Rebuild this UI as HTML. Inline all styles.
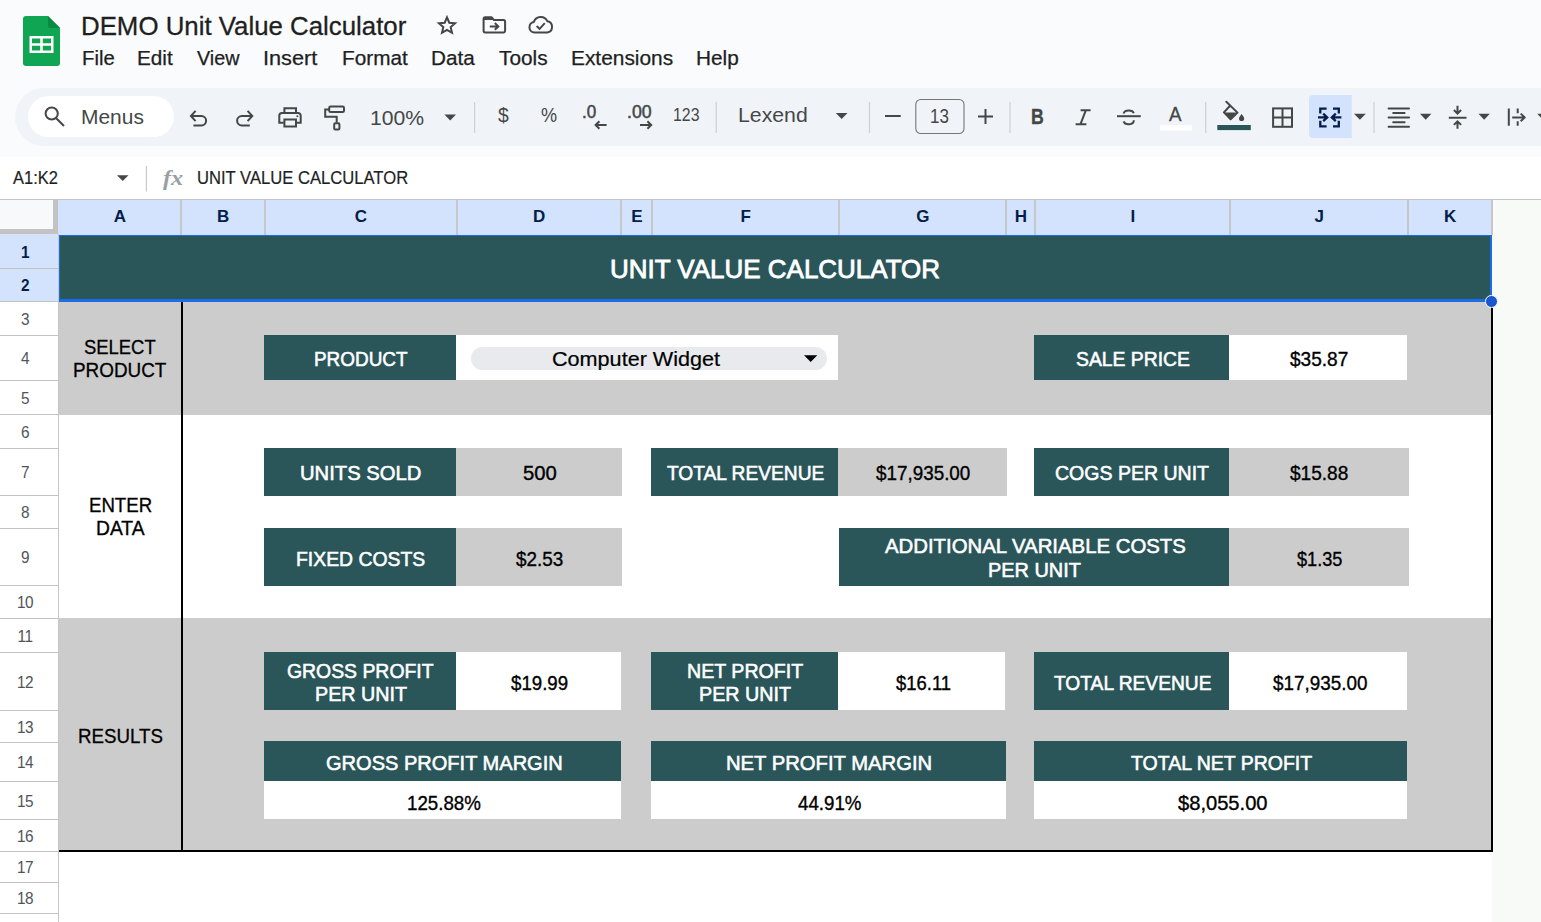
<!DOCTYPE html>
<html><head><meta charset="utf-8"><title>DEMO Unit Value Calculator</title>
<style>
html,body{margin:0;padding:0;}
body{width:1541px;height:922px;overflow:hidden;position:relative;background:#f9fbfd;font-family:"Liberation Sans",sans-serif;}
.r{position:absolute;box-sizing:content-box;}
.t{position:absolute;white-space:nowrap;line-height:1;transform-origin:0 0;display:block;}
.ch{position:absolute;top:206.6px;width:40px;text-align:center;font-size:17px;font-weight:700;color:#041e49;line-height:20px;}
.rn{position:absolute;left:4.5px;width:40px;text-align:center;font-size:16.5px;color:#50545a;line-height:20px;letter-spacing:-0.6px;transform:scaleX(0.93);}
.rn.sel{font-weight:700;color:#041e49;}
#tb{position:absolute;left:14.5px;top:88px;width:1600px;height:58px;border-radius:29px;background:#f0f4f9;}
#sb{position:absolute;left:28.3px;top:96px;width:145.7px;height:41.3px;border-radius:21px;background:#fff;}
#fb{position:absolute;left:0;top:157px;width:1541px;height:42px;background:#fff;}
svg.ov{position:absolute;left:0;top:0;}
</style></head><body>
<div id="tb"></div><div id="sb"></div><div id="fb"></div>
<div class="r" style="left:0px;top:199px;width:1492px;height:723px;background:#fff;"></div>
<div class="r" style="left:1492px;top:200px;width:49px;height:722px;background:#f8faf7;"></div>
<div class="r" style="left:0px;top:199px;width:1541px;height:1px;background:#c6c6c6;"></div>
<div class="r" style="left:58px;top:200px;width:1434px;height:35px;background:#d3e3fd;"></div>
<div class="r" style="left:180.3px;top:200px;width:1.799999999999983px;height:35px;background:#c5c7ca;"></div>
<div class="r" style="left:263.8px;top:200px;width:1.8000000000000114px;height:35px;background:#c5c7ca;"></div>
<div class="r" style="left:455.8px;top:200px;width:1.8000000000000114px;height:35px;background:#c5c7ca;"></div>
<div class="r" style="left:620.3px;top:200px;width:1.8000000000000682px;height:35px;background:#c5c7ca;"></div>
<div class="r" style="left:650.8px;top:200px;width:1.8000000000000682px;height:35px;background:#c5c7ca;"></div>
<div class="r" style="left:838.3px;top:200px;width:1.8000000000000682px;height:35px;background:#c5c7ca;"></div>
<div class="r" style="left:1004.8px;top:200px;width:1.8000000000000682px;height:35px;background:#c5c7ca;"></div>
<div class="r" style="left:1034.3px;top:200px;width:1.7999999999999545px;height:35px;background:#c5c7ca;"></div>
<div class="r" style="left:1228.8px;top:200px;width:1.7999999999999545px;height:35px;background:#c5c7ca;"></div>
<div class="r" style="left:1407.3px;top:200px;width:1.7999999999999545px;height:35px;background:#c5c7ca;"></div>
<div class="r" style="left:1490.8px;top:200px;width:1.7999999999999545px;height:35px;background:#c5c7ca;"></div>
<div class="r" style="left:0px;top:200px;width:58.4px;height:34.30000000000001px;background:#c3c3c3;"></div>
<div class="r" style="left:0px;top:200px;width:53px;height:29px;background:#f8f9fa;"></div>
<div class="r" style="left:0px;top:235px;width:58px;height:687px;background:#fff;"></div>
<div class="r" style="left:0px;top:234px;width:58px;height:67px;background:#d3e3fd;"></div>
<div class="r" style="left:0px;top:267.8px;width:58px;height:1.3000000000000114px;background:#c2c2c2;"></div>
<div class="r" style="left:0px;top:300.8px;width:58px;height:1.3000000000000114px;background:#c2c2c2;"></div>
<div class="r" style="left:0px;top:334.8px;width:58px;height:1.3000000000000114px;background:#c2c2c2;"></div>
<div class="r" style="left:0px;top:379.8px;width:58px;height:1.3000000000000114px;background:#c2c2c2;"></div>
<div class="r" style="left:0px;top:413.8px;width:58px;height:1.3000000000000114px;background:#c2c2c2;"></div>
<div class="r" style="left:0px;top:447.8px;width:58px;height:1.3000000000000114px;background:#c2c2c2;"></div>
<div class="r" style="left:0px;top:494.8px;width:58px;height:1.3000000000000114px;background:#c2c2c2;"></div>
<div class="r" style="left:0px;top:527.8px;width:58px;height:1.3000000000000682px;background:#c2c2c2;"></div>
<div class="r" style="left:0px;top:584.8px;width:58px;height:1.3000000000000682px;background:#c2c2c2;"></div>
<div class="r" style="left:0px;top:617.8px;width:58px;height:1.3000000000000682px;background:#c2c2c2;"></div>
<div class="r" style="left:0px;top:651.8px;width:58px;height:1.3000000000000682px;background:#c2c2c2;"></div>
<div class="r" style="left:0px;top:709.8px;width:58px;height:1.3000000000000682px;background:#c2c2c2;"></div>
<div class="r" style="left:0px;top:741.8px;width:58px;height:1.3000000000000682px;background:#c2c2c2;"></div>
<div class="r" style="left:0px;top:780.8px;width:58px;height:1.3000000000000682px;background:#c2c2c2;"></div>
<div class="r" style="left:0px;top:818.8px;width:58px;height:1.3000000000000682px;background:#c2c2c2;"></div>
<div class="r" style="left:0px;top:850.8px;width:58px;height:1.3000000000000682px;background:#c2c2c2;"></div>
<div class="r" style="left:0px;top:881.8px;width:58px;height:1.3000000000000682px;background:#c2c2c2;"></div>
<div class="r" style="left:0px;top:912.8px;width:58px;height:1.3000000000000682px;background:#c2c2c2;"></div>
<div class="r" style="left:0px;top:943.8px;width:58px;height:1.3000000000000682px;background:#c2c2c2;"></div>
<div class="r" style="left:57.5px;top:234px;width:1.5px;height:688px;background:#c6c6c6;"></div>
<span class="ch" style="left:100.0px;">A</span>
<span class="ch" style="left:203.2px;">B</span>
<span class="ch" style="left:341.0px;">C</span>
<span class="ch" style="left:519.2px;">D</span>
<span class="ch" style="left:616.8px;">E</span>
<span class="ch" style="left:725.8px;">F</span>
<span class="ch" style="left:902.8px;">G</span>
<span class="ch" style="left:1000.8px;">H</span>
<span class="ch" style="left:1112.8px;">I</span>
<span class="ch" style="left:1299.2px;">J</span>
<span class="ch" style="left:1430.2px;">K</span>
<span class="rn sel" style="top:242.0px;">1</span>
<span class="rn sel" style="top:275.0px;">2</span>
<span class="rn" style="top:308.5px;">3</span>
<span class="rn" style="top:348.0px;">4</span>
<span class="rn" style="top:387.5px;">5</span>
<span class="rn" style="top:421.5px;">6</span>
<span class="rn" style="top:462.0px;">7</span>
<span class="rn" style="top:502.0px;">8</span>
<span class="rn" style="top:547.0px;">9</span>
<span class="rn" style="top:592.0px;">10</span>
<span class="rn" style="top:625.5px;">11</span>
<span class="rn" style="top:671.5px;">12</span>
<span class="rn" style="top:716.5px;">13</span>
<span class="rn" style="top:752.0px;">14</span>
<span class="rn" style="top:790.5px;">15</span>
<span class="rn" style="top:825.5px;">16</span>
<span class="rn" style="top:857.0px;">17</span>
<span class="rn" style="top:888.0px;">18</span>
<div class="r" style="left:59px;top:235px;width:1433px;height:66px;background:#2a565a;"></div>
<div class="r" style="left:59px;top:301px;width:1433px;height:113.60000000000002px;background:#cccccc;"></div>
<div class="r" style="left:59px;top:618.1px;width:1433px;height:232.89999999999998px;background:#cccccc;"></div>
<div class="r" style="left:264px;top:334.8px;width:192px;height:44.89999999999998px;background:#2a565a;"></div>
<div class="r" style="left:456px;top:334.8px;width:382.29999999999995px;height:44.89999999999998px;background:#fff;"></div>
<div class="r" style="left:1034.3px;top:334.8px;width:194.70000000000005px;height:44.89999999999998px;background:#2a565a;"></div>
<div class="r" style="left:1229px;top:334.8px;width:178.4000000000001px;height:44.89999999999998px;background:#fff;"></div>
<div class="r" style="left:264px;top:447.5px;width:192px;height:48.30000000000001px;background:#2a565a;"></div>
<div class="r" style="left:456px;top:447.5px;width:165.79999999999995px;height:48.30000000000001px;background:#cccccc;"></div>
<div class="r" style="left:651px;top:447.5px;width:187.39999999999998px;height:48.30000000000001px;background:#2a565a;"></div>
<div class="r" style="left:838.4px;top:447.5px;width:168.60000000000002px;height:48.30000000000001px;background:#cccccc;"></div>
<div class="r" style="left:1034.3px;top:447.5px;width:194.70000000000005px;height:48.30000000000001px;background:#2a565a;"></div>
<div class="r" style="left:1229px;top:447.5px;width:180px;height:48.30000000000001px;background:#cccccc;"></div>
<div class="r" style="left:264px;top:528.0px;width:192px;height:57.799999999999955px;background:#2a565a;"></div>
<div class="r" style="left:456px;top:528.0px;width:165.79999999999995px;height:57.799999999999955px;background:#cccccc;"></div>
<div class="r" style="left:838.5px;top:528.0px;width:390.5px;height:57.799999999999955px;background:#2a565a;"></div>
<div class="r" style="left:1229px;top:528.0px;width:180px;height:57.799999999999955px;background:#cccccc;"></div>
<div class="r" style="left:264px;top:651.5px;width:192px;height:58.5px;background:#2a565a;"></div>
<div class="r" style="left:456px;top:651.5px;width:164.5px;height:58.5px;background:#fff;"></div>
<div class="r" style="left:651px;top:651.5px;width:187.20000000000005px;height:58.5px;background:#2a565a;"></div>
<div class="r" style="left:838.2px;top:651.5px;width:167.29999999999995px;height:58.5px;background:#fff;"></div>
<div class="r" style="left:1034.3px;top:651.5px;width:194.70000000000005px;height:58.5px;background:#2a565a;"></div>
<div class="r" style="left:1229px;top:651.5px;width:178.4000000000001px;height:58.5px;background:#fff;"></div>
<div class="r" style="left:264px;top:740.8px;width:356.5px;height:40.200000000000045px;background:#2a565a;"></div>
<div class="r" style="left:264px;top:781.0px;width:356.5px;height:37.700000000000045px;background:#fff;"></div>
<div class="r" style="left:651px;top:740.8px;width:354.5px;height:40.200000000000045px;background:#2a565a;"></div>
<div class="r" style="left:651px;top:781.0px;width:354.5px;height:37.700000000000045px;background:#fff;"></div>
<div class="r" style="left:1034.3px;top:740.8px;width:373.10000000000014px;height:40.200000000000045px;background:#2a565a;"></div>
<div class="r" style="left:1034.3px;top:781.0px;width:373.10000000000014px;height:37.700000000000045px;background:#fff;"></div>
<div class="r" style="left:470.5px;top:346.5px;width:356.0px;height:23.5px;background:#e8eaed;border-radius:12px;"></div>
<div class="r" style="left:180.9px;top:302px;width:1.799999999999983px;height:549.5px;background:#000;"></div>
<div class="r" style="left:1490.9px;top:302px;width:1.699999999999818px;height:549.5px;background:#000;"></div>
<div class="r" style="left:59px;top:850.2px;width:1433.6px;height:1.6999999999999318px;background:#000;"></div>
<div class="r" style="left:59.3px;top:234.7px;width:1433.1000000000001px;height:1.8000000000000114px;background:#1a6ce8;"></div>
<div class="r" style="left:59.3px;top:234.7px;width:1.0px;height:67.10000000000002px;background:#1a6ce8;"></div>
<div class="r" style="left:59.3px;top:298.8px;width:1433.1000000000001px;height:3.0px;background:#1a6ce8;"></div>
<div class="r" style="left:1489.9px;top:234.7px;width:2.5px;height:67.10000000000002px;background:#1a6ce8;"></div>
<div class="r" style="left:1485.4px;top:295.1px;width:10.6px;height:10.6px;border-radius:50%;background:#1857cf;border:1px solid #fff;"></div>
<svg class="ov" width="1541" height="922" viewBox="0 0 1541 922">
<path d="M26 16 H48 L60 28 V63 a3 3 0 0 1 -3 3 H26 a3 3 0 0 1 -3 -3 V19 a3 3 0 0 1 3 -3 Z" fill="#10a553"/>
<path d="M48 16 L60 28 H50.5 a2.5 2.5 0 0 1 -2.5 -2.5 Z" fill="#0b8a42"/>
<path d="M29.5 36 H53.5 V53 H29.5 Z M32 38.5 V43.2 H40.2 V38.5 Z M42.8 38.5 V43.2 H51 V38.5 Z M32 45.8 V50.5 H40.2 V45.8 Z M42.8 45.8 V50.5 H51 V45.8 Z" fill="#fff" fill-rule="evenodd"/>
<polygon points="447.00,17.40 449.29,22.74 455.08,23.27 450.71,27.11 452.00,32.78 447.00,29.80 442.00,32.78 443.29,27.11 438.92,23.27 444.71,22.74" stroke="#444746" fill="none" stroke-width="2" stroke-linejoin="miter"/>
<path d="M485.2 17.3 h6.3 l2.4 2.6 h9.6 a1.6 1.6 0 0 1 1.6 1.6 v9.3 a1.6 1.6 0 0 1 -1.6 1.6 h-18.3 a1.6 1.6 0 0 1 -1.6 -1.6 v-11.9 a1.6 1.6 0 0 1 1.6 -1.6 z" stroke="#444746" fill="none" stroke-width="2"/>
<path d="M484 17.3 h7.5 l2.4 2.6 h-9.9 z" fill="#444746"/>
<path d="M489.8 26.4 H498 M494.8 23 L498.3 26.4 L494.8 29.8" stroke="#444746" fill="none" stroke-width="2" stroke-width="2.1"/>
<path d="M534.6 32.6 a5.4 5.4 0 0 1 -0.8 -10.7 a7.4 7.4 0 0 1 13.6 -0.7 a5.8 5.8 0 0 1 -0.2 11.4 z" stroke="#444746" fill="none" stroke-width="2"/>
<path d="M536.7 26 L539.6 28.9 L544.8 23.2" stroke="#444746" fill="none" stroke-width="2" stroke-width="2.1"/>
<circle cx="51.7" cy="113.5" r="6.1" stroke="#444746" fill="none" stroke-width="2" stroke-width="2.2"/><path d="M56.2 118.2 L64 126" stroke="#444746" fill="none" stroke-width="2" stroke-width="2.4"/>
<path d="M195.6 110.9 L190.9 116 L195.6 121.1 M191.6 116 H201.4 A4.7 4.7 0 0 1 201.4 125.4 H193.4" stroke="#444746" fill="none" stroke-width="2" stroke-width="2.2"/>
<path d="M247.6 110.9 L252.3 116 L247.6 121.1 M251.6 116 H241.8 A4.7 4.7 0 0 0 241.8 125.4 H249.8" stroke="#444746" fill="none" stroke-width="2" stroke-width="2.2"/>
<path d="M284.4 112.4 V108.2 H296 V112.4 M283.8 122.7 H279.3 V115.6 a2.6 2.6 0 0 1 2.6 -2.6 H298.1 a2.6 2.6 0 0 1 2.6 2.6 V122.7 H296.6" stroke="#444746" fill="none" stroke-width="2"/>
<rect x="284.4" y="119.5" width="11.6" height="7" stroke="#444746" fill="none" stroke-width="2"/>
<circle cx="297.4" cy="116.2" r="1" fill="#444746"/>
<rect x="329.2" y="106.5" width="14.8" height="5.6" rx="1.4" stroke="#444746" fill="none" stroke-width="2"/>
<path d="M329.2 109.6 H325.2 V116.8 H336.7 V122.6" stroke="#444746" fill="none" stroke-width="2"/>
<rect x="334.2" y="123.2" width="5.2" height="6.4" rx="1" stroke="#444746" fill="none" stroke-width="2"/>
<polygon points="444.4,114.6 456,114.6 450.2,120.6" fill="#444746"/>
<polygon points="835.8,113 847.5,113 841.65,119" fill="#444746"/>
<polygon points="1354,113.8 1365.8,113.8 1359.9,119.7" fill="#444746"/>
<polygon points="1420,113.8 1431.4,113.8 1425.7,119.7" fill="#444746"/>
<polygon points="1478.5,113.8 1489.8,113.8 1484.15,119.7" fill="#444746"/>
<polygon points="1537.2,113.8 1548.6,113.8 1542.9,119.7" fill="#444746"/>
<polygon points="117,175.2 128.5,175.2 122.75,181" fill="#444746"/>
<polygon points="804,355.3 817.3,355.3 810.65,362" fill="#000"/>
<rect x="474.0" y="102" width="1.2" height="31" fill="#cdd0d5"/>
<rect x="715.6" y="102" width="1.2" height="31" fill="#cdd0d5"/>
<rect x="868.9" y="102" width="1.2" height="31" fill="#cdd0d5"/>
<rect x="1009.4" y="102" width="1.2" height="31" fill="#cdd0d5"/>
<rect x="1205.1000000000001" y="102" width="1.2" height="31" fill="#cdd0d5"/>
<rect x="1373.4" y="102" width="1.2" height="31" fill="#cdd0d5"/>
<rect x="145.8" y="166" width="1.2" height="25.5" fill="#c7c9cc"/>
<path d="M595.6 125 H606.6 M599.4 121.3 L595.6 125 L599.4 128.7" stroke="#444746" fill="none" stroke-width="2" stroke-width="1.8"/>
<path d="M640 125 H651.2 M647.4 121.3 L651.2 125 L647.4 128.7" stroke="#444746" fill="none" stroke-width="2" stroke-width="1.8"/>
<path d="M885 116 H900.7 M978 116.5 H993 M985.5 109 V124" stroke="#444746" fill="none" stroke-width="2"/>
<rect x="915.8" y="99.5" width="48.2" height="34" rx="5" fill="none" stroke="#747775" stroke-width="1.1"/>
<path d="M1080.6 110.2 H1090.6 M1075.6 124.3 H1086.4 M1085.9 110.2 L1080.4 124.3" stroke="#444746" fill="none" stroke-width="2" stroke-width="3.1"/>
<path d="M1117 116.2 H1140.8" stroke="#444746" fill="none" stroke-width="2" stroke-width="2.1"/>
<path d="M1133.8 113.2 A5.2 3.6 0 0 0 1123.6 113.4 M1123.6 121.4 A5.2 4.0 0 0 0 1133.8 120.2" stroke="#444746" fill="none" stroke-width="2" stroke-width="2.8"/>
<rect x="1160" y="125" width="32" height="5.5" fill="#fff"/>
<path d="M1226.3 101.7 L1237.5 112.6 L1230.6 119.3 L1223.9 112.4 L1229.6 106.2" stroke="#444746" fill="none" stroke-width="2" stroke-width="2.3" stroke-linejoin="round" stroke-linecap="round"/>
<path d="M1224.4 112.4 H1237 L1230.6 118.8 Z" fill="#444746"/>
<path d="M1241.6 114 C1242.9 115.8 1244.2 117.3 1244.2 118.4 a2.6 2.6 0 0 1 -5.2 0 C1239 117.3 1240.3 115.8 1241.6 114 Z" fill="#444746"/>
<rect x="1217.3" y="125" width="33.5" height="5.1" fill="#2a565a"/>
<rect x="1273.1" y="108.4" width="18.9" height="18.4" stroke="#444746" fill="none" stroke-width="2" stroke-width="2.4"/><path d="M1282.5 108.4 V126.8 M1273.1 117.6 H1292" stroke="#444746" fill="none" stroke-width="2" stroke-width="2.2"/>
<path d="M1313 95 H1351.8 V138 H1313 a4 4 0 0 1 -4 -4 V99 a4 4 0 0 1 4 -4 Z" fill="#d3e3fd"/>
<path d="M1326.6 108.6 H1320.3 V113.4 M1320.3 120.8 V126.4 H1326.6 M1333 108.6 H1338.8 V113.4 M1338.8 120.8 V126.4 H1333" stroke="#041e49" fill="none" stroke-width="2.3"/>
<path d="M1318 117.4 H1326.6 M1323.2 113.6 L1327.2 117.4 L1323.2 121.2 M1341.4 117.4 H1332.4 M1335.8 113.6 L1331.8 117.4 L1335.8 121.2" stroke="#041e49" fill="none" stroke-width="2.3" stroke-width="2.4"/>
<path d="M1388.6 108.4 H1409 M1393.2 113 H1404.6 M1388.6 117.6 H1409 M1393.2 122.2 H1404.6 M1388.6 126.7 H1409" stroke="#444746" fill="none" stroke-width="2" stroke-width="2" stroke-linecap="round"/>
<path d="M1448.8 117.7 H1466.5 M1457.5 105.8 V113 M1453.9 110 L1457.5 113.6 L1461.1 110 M1457.5 128.8 V121.8 M1453.9 124.9 L1457.5 121.3 L1461.1 124.9" stroke="#444746" fill="none" stroke-width="2" stroke-width="2.2"/>
<path d="M1508.8 108.4 V125.8 M1517.7 108.4 V113.2 M1517.7 121.3 V125.8 M1512.2 117.4 H1524.2 M1520.7 113.6 L1524.6 117.4 L1520.7 121.2" stroke="#444746" fill="none" stroke-width="2" stroke-width="2.2"/>
</svg>
<span class="t" style="left:163.2px;top:167.2px;font-size:22px;font-family:'Liberation Serif',serif;font-style:italic;font-weight:700;color:#9b9fa4;transform:scaleX(1.1);">fx</span>
<span class="t" style="left:81.14px;top:14.00px;font-size:25.73px;color:#1f1f1f;transform:scaleX(1.0040);-webkit-text-stroke:0.3px #1f1f1f;">DEMO Unit Value Calculator</span>
<span class="t" style="left:81.59px;top:49.00px;font-size:19.69px;color:#1f1f1f;transform:scaleX(1.0317);-webkit-text-stroke:0.25px #1f1f1f;">File</span>
<span class="t" style="left:137.07px;top:49.00px;font-size:19.69px;color:#1f1f1f;transform:scaleX(1.0537);-webkit-text-stroke:0.25px #1f1f1f;">Edit</span>
<span class="t" style="left:197.12px;top:49.00px;font-size:19.69px;color:#1f1f1f;transform:scaleX(1.0035);-webkit-text-stroke:0.25px #1f1f1f;">View</span>
<span class="t" style="left:263.02px;top:49.00px;font-size:19.69px;color:#1f1f1f;transform:scaleX(1.1022);-webkit-text-stroke:0.25px #1f1f1f;">Insert</span>
<span class="t" style="left:341.57px;top:49.00px;font-size:19.69px;color:#1f1f1f;transform:scaleX(1.0545);-webkit-text-stroke:0.25px #1f1f1f;">Format</span>
<span class="t" style="left:431.07px;top:49.00px;font-size:19.69px;color:#1f1f1f;transform:scaleX(1.0520);-webkit-text-stroke:0.25px #1f1f1f;">Data</span>
<span class="t" style="left:499.12px;top:49.00px;font-size:19.69px;color:#1f1f1f;transform:scaleX(1.0571);-webkit-text-stroke:0.25px #1f1f1f;">Tools</span>
<span class="t" style="left:570.56px;top:49.00px;font-size:19.69px;color:#1f1f1f;transform:scaleX(1.0607);-webkit-text-stroke:0.25px #1f1f1f;">Extensions</span>
<span class="t" style="left:696.07px;top:49.00px;font-size:19.69px;color:#1f1f1f;transform:scaleX(1.0559);-webkit-text-stroke:0.25px #1f1f1f;">Help</span>
<span class="t" style="left:80.68px;top:107.00px;font-size:20.49px;color:#444746;transform:scaleX(1.0226);">Menus</span>
<span class="t" style="left:370.38px;top:108.00px;font-size:20.78px;color:#444746;transform:scaleX(1.0185);">100%</span>
<span class="t" style="left:497.70px;top:105.00px;font-size:20.06px;color:#444746;transform:scaleX(0.9636);">$</span>
<span class="t" style="left:540.70px;top:105.00px;font-size:20.2px;color:#444746;transform:scaleX(0.8944);">%</span>
<span class="t" style="left:581.67px;top:104.00px;font-size:17.44px;color:#444746;transform:scaleX(0.9751);-webkit-text-stroke:0.5px #444746;">.0</span>
<span class="t" style="left:626.83px;top:104.00px;font-size:17.44px;color:#444746;transform:scaleX(1.0152);-webkit-text-stroke:0.5px #444746;">.00</span>
<span class="t" style="left:673.10px;top:107.00px;font-size:17.73px;color:#444746;transform:scaleX(0.8952);">123</span>
<span class="t" style="left:737.88px;top:105.00px;font-size:20.93px;color:#444746;transform:scaleX(1.0164);">Lexend</span>
<span class="t" style="left:929.73px;top:107.00px;font-size:19.62px;color:#444746;transform:scaleX(0.8658);">13</span>
<span class="t" style="left:1030.91px;top:106.00px;font-size:21.22px;color:#444746;transform:scaleX(0.8357);font-weight:700;-webkit-text-stroke:0.3px #444746;">B</span>
<span class="t" style="left:1168.75px;top:104.00px;font-size:20.35px;color:#444746;transform:scaleX(0.9214);-webkit-text-stroke:0.3px #444746;">A</span>
<span class="t" style="left:12.70px;top:170.00px;font-size:17.88px;color:#1f1f1f;transform:scaleX(0.9216);-webkit-text-stroke:0.2px #1f1f1f;">A1:K2</span>
<span class="t" style="left:197.37px;top:170.00px;font-size:17.88px;color:#1f1f1f;transform:scaleX(0.9304);-webkit-text-stroke:0.2px #1f1f1f;">UNIT VALUE CALCULATOR</span>
<span class="t" style="left:609.96px;top:257.00px;font-size:25.0px;color:#ffffff;transform:scaleX(1.0390);-webkit-text-stroke:0.8px #ffffff;">UNIT VALUE CALCULATOR</span>
<span class="t" style="left:84.45px;top:338.00px;font-size:19.91px;color:#000;transform:scaleX(0.9252);-webkit-text-stroke:0.3px #000;">SELECT</span>
<span class="t" style="left:73.41px;top:360.00px;font-size:20.06px;color:#000;transform:scaleX(0.9420);-webkit-text-stroke:0.3px #000;">PRODUCT</span>
<span class="t" style="left:313.71px;top:350.00px;font-size:19.69px;color:#ffffff;transform:scaleX(0.9609);-webkit-text-stroke:0.55px #ffffff;">PRODUCT</span>
<span class="t" style="left:552.43px;top:349.00px;font-size:20.2px;color:#000;transform:scaleX(1.0699);-webkit-text-stroke:0.2px #000;">Computer Widget</span>
<span class="t" style="left:1076.18px;top:350.00px;font-size:19.69px;color:#ffffff;transform:scaleX(0.9827);-webkit-text-stroke:0.55px #ffffff;">SALE PRICE</span>
<span class="t" style="left:1290.17px;top:349.00px;font-size:19.99px;color:#000;transform:scaleX(0.9531);-webkit-text-stroke:0.35px #000;">$35.87</span>
<span class="t" style="left:300.06px;top:464.00px;font-size:19.84px;color:#ffffff;transform:scaleX(1.0194);-webkit-text-stroke:0.55px #ffffff;">UNITS SOLD</span>
<span class="t" style="left:522.57px;top:463.00px;font-size:20.13px;color:#000;transform:scaleX(1.0085);-webkit-text-stroke:0.35px #000;">500</span>
<span class="t" style="left:666.88px;top:464.00px;font-size:19.84px;color:#ffffff;transform:scaleX(0.9665);-webkit-text-stroke:0.55px #ffffff;">TOTAL REVENUE</span>
<span class="t" style="left:875.57px;top:463.00px;font-size:20.13px;color:#000;transform:scaleX(0.9372);-webkit-text-stroke:0.35px #000;">$17,935.00</span>
<span class="t" style="left:1055.19px;top:464.00px;font-size:19.84px;color:#ffffff;transform:scaleX(0.9847);-webkit-text-stroke:0.55px #ffffff;">COGS PER UNIT</span>
<span class="t" style="left:1290.17px;top:463.00px;font-size:20.13px;color:#000;transform:scaleX(0.9483);-webkit-text-stroke:0.35px #000;">$15.88</span>
<span class="t" style="left:296.11px;top:549.00px;font-size:19.99px;color:#ffffff;transform:scaleX(0.9699);-webkit-text-stroke:0.55px #ffffff;">FIXED COSTS</span>
<span class="t" style="left:516.38px;top:549.00px;font-size:20.28px;color:#000;transform:scaleX(0.9327);-webkit-text-stroke:0.35px #000;">$2.53</span>
<span class="t" style="left:884.77px;top:536.00px;font-size:19.99px;color:#ffffff;transform:scaleX(1.0184);-webkit-text-stroke:0.55px #ffffff;">ADDITIONAL VARIABLE COSTS</span>
<span class="t" style="left:988.18px;top:560.00px;font-size:19.99px;color:#ffffff;transform:scaleX(0.9966);-webkit-text-stroke:0.55px #ffffff;">PER UNIT</span>
<span class="t" style="left:1296.67px;top:549.00px;font-size:20.28px;color:#000;transform:scaleX(0.8951);-webkit-text-stroke:0.35px #000;">$1.35</span>
<span class="t" style="left:287.40px;top:662.00px;font-size:19.84px;color:#ffffff;transform:scaleX(0.9781);-webkit-text-stroke:0.55px #ffffff;">GROSS PROFIT</span>
<span class="t" style="left:314.68px;top:685.00px;font-size:19.84px;color:#ffffff;transform:scaleX(0.9948);-webkit-text-stroke:0.55px #ffffff;">PER UNIT</span>
<span class="t" style="left:511.38px;top:673.00px;font-size:20.13px;color:#000;transform:scaleX(0.9287);-webkit-text-stroke:0.35px #000;">$19.99</span>
<span class="t" style="left:687.29px;top:662.00px;font-size:19.84px;color:#ffffff;transform:scaleX(0.9897);-webkit-text-stroke:0.55px #ffffff;">NET PROFIT</span>
<span class="t" style="left:699.38px;top:685.00px;font-size:19.84px;color:#ffffff;transform:scaleX(0.9948);-webkit-text-stroke:0.55px #ffffff;">PER UNIT</span>
<span class="t" style="left:895.57px;top:673.00px;font-size:20.13px;color:#000;transform:scaleX(0.9184);-webkit-text-stroke:0.35px #000;">$16.11</span>
<span class="t" style="left:1054.18px;top:674.00px;font-size:19.84px;color:#ffffff;transform:scaleX(0.9678);-webkit-text-stroke:0.55px #ffffff;">TOTAL REVENUE</span>
<span class="t" style="left:1272.97px;top:673.00px;font-size:20.13px;color:#000;transform:scaleX(0.9382);-webkit-text-stroke:0.35px #000;">$17,935.00</span>
<span class="t" style="left:325.57px;top:753.00px;font-size:19.99px;color:#ffffff;transform:scaleX(1.0025);-webkit-text-stroke:0.55px #ffffff;">GROSS PROFIT MARGIN</span>
<span class="t" style="left:406.85px;top:793.00px;font-size:20.28px;color:#000;transform:scaleX(0.9236);-webkit-text-stroke:0.35px #000;">125.88%</span>
<span class="t" style="left:726.26px;top:753.00px;font-size:19.99px;color:#ffffff;transform:scaleX(1.0129);-webkit-text-stroke:0.55px #ffffff;">NET PROFIT MARGIN</span>
<span class="t" style="left:797.57px;top:793.00px;font-size:20.28px;color:#000;transform:scaleX(0.9234);-webkit-text-stroke:0.35px #000;">44.91%</span>
<span class="t" style="left:1131.28px;top:753.00px;font-size:19.99px;color:#ffffff;transform:scaleX(0.9751);-webkit-text-stroke:0.55px #ffffff;">TOTAL NET PROFIT</span>
<span class="t" style="left:1177.88px;top:793.00px;font-size:20.28px;color:#000;transform:scaleX(0.9929);-webkit-text-stroke:0.35px #000;">$8,055.00</span>
<span class="t" style="left:88.90px;top:496.00px;font-size:19.62px;color:#000;transform:scaleX(0.9495);-webkit-text-stroke:0.3px #000;">ENTER</span>
<span class="t" style="left:95.77px;top:519.00px;font-size:19.62px;color:#000;transform:scaleX(0.9836);-webkit-text-stroke:0.3px #000;">DATA</span>
<span class="t" style="left:78.02px;top:726.00px;font-size:20.06px;color:#000;transform:scaleX(0.9330);-webkit-text-stroke:0.3px #000;">RESULTS</span>
</body></html>
